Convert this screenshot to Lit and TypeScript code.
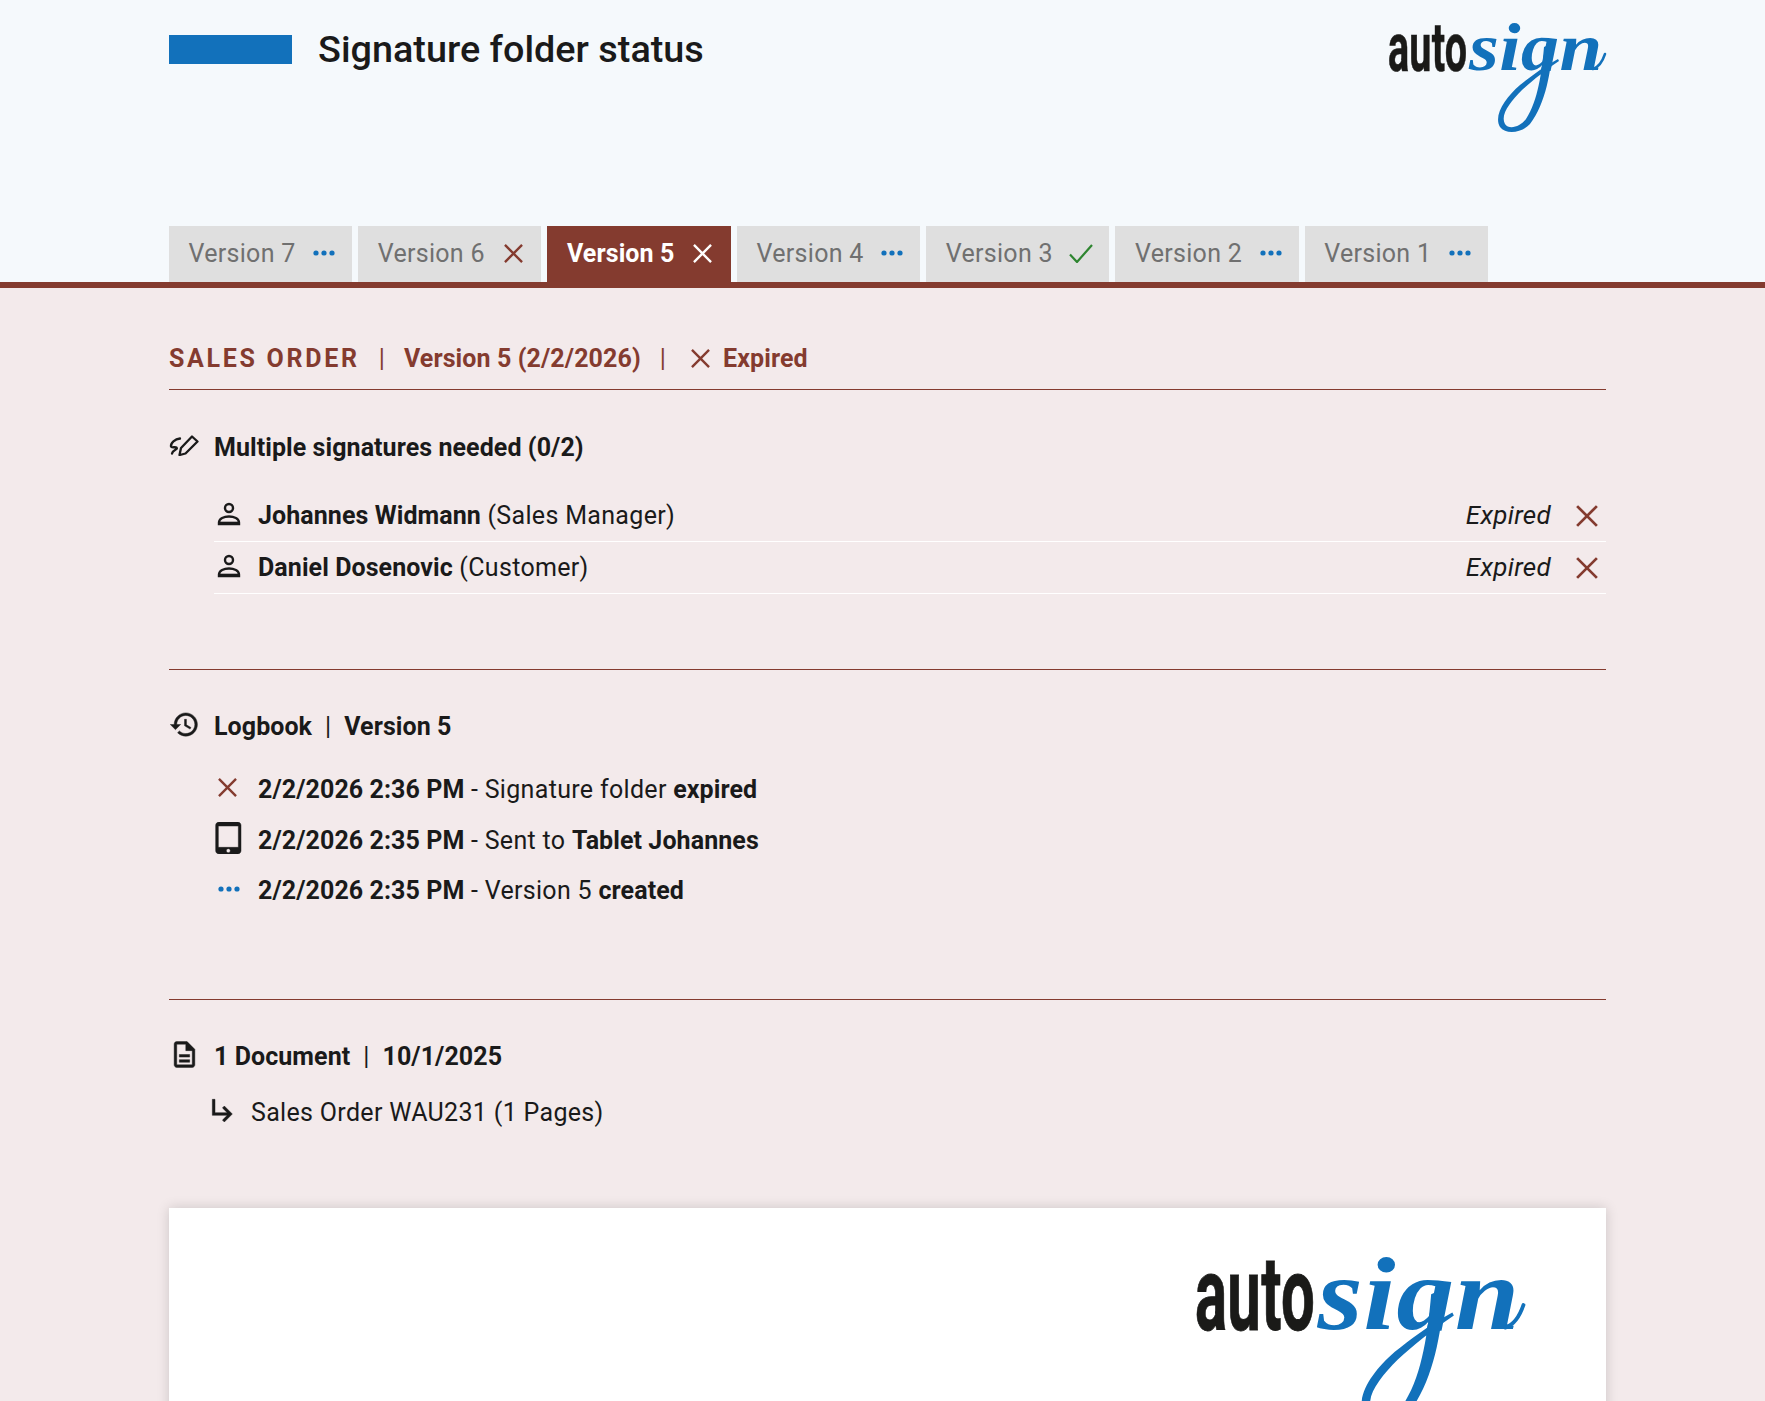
import { LitElement, html, css, svg } from "lit";
import { customElement } from "lit/decorators.js";

const x = (size: number, cls = "rust", w = 2.5) => html`<svg class=${cls} width=${size} height=${size} viewBox="0 0 20 20" fill="none" stroke="currentColor" stroke-width=${w}><path d="M1 1L19 19M19 1L1 19"/></svg>`;
const dots = () => html`<svg class="blue" width="22" height="6" viewBox="0 0 22 6" fill="currentColor"><circle cx="3" cy="3" r="2.6"/><circle cx="11" cy="3" r="2.6"/><circle cx="19" cy="3" r="2.6"/></svg>`;
const check = () => html`<svg class="green" width="24" height="19" viewBox="0 0 24 19" fill="none" stroke="currentColor" stroke-width="2.2"><path d="M1 10.5L8 18L23 1"/></svg>`;
const person = () => html`<svg width="24" height="24" viewBox="0 0 24 24" fill="none" stroke="currentColor" stroke-width="2.4"><circle cx="12" cy="6" r="4"/><path d="M2 22V20.5C2 16.5 7 14.5 12 14.5S22 16.5 22 20.5V22Z"/><path d="M2 20.5H22" stroke-width="1.6"/></svg>`;
const mi = (size: number, d: string) => html`<svg width=${size} height=${size} viewBox="0 0 24 24" fill="currentColor" stroke="currentColor" stroke-width=".35"><path d=${d}/></svg>`;
const signIcon = () => html`<svg width="30" height="22" viewBox="0 0 30 22" fill="none" stroke="currentColor" stroke-width="2.3" stroke-linejoin="round" stroke-linecap="round"><path d="M12 14L23 2.5L28.5 7.5L16.5 19.5L10.5 21Z"/><path d="M11 4.5C6 5 1.5 9 2 12.5C2.5 14.5 7.5 12 8 14C8.5 15.5 3.5 16 3 19.5"/></svg>`;
const logo = (cls: string, id: string) => html`<svg class=${cls} viewBox="0 0 218 109">
  ${svg`<defs><clipPath id=${id}><rect x="78" y="-12" width="150" height="60"/></clipPath></defs>
  <g transform="translate(0 47.5) scale(.582 1)"><text font-family="Roboto,sans-serif" font-weight="700" font-size="68" fill="#1a1a18" stroke="#1a1a18" stroke-width=".6">auto</text></g>
  <g clip-path="url(#${id})"><g transform="translate(81 47) scale(1.128 1)"><text font-family="'Liberation Serif',serif" font-style="italic" font-weight="700" font-size="68" fill="#1271bb">sign</text></g></g>
  <path d="M165 20C163 48 158 80 142 101C134 110 118 112 112 104C105 92 118 74 132 62C142 54 155 44 170 36L171 38C156 48 144 58 134 67C122 79 112 92 117 101C121 107 132 104 138 96C150 78 154 48 156 24Z" fill="#1271bb"/>
  <path d="M205 46C211 44 215 37 217 31" fill="none" stroke="#1271bb" stroke-width="2.5" stroke-linecap="round"/>`}
</svg>`;

const HISTORY = "M13 3c-4.97 0-9 4.03-9 9H1l3.89 3.89.07.14L9 12H6c0-3.87 3.13-7 7-7s7 3.13 7 7-3.13 7-7 7c-1.93 0-3.68-.79-4.94-2.06l-1.42 1.42C8.27 19.99 10.51 21 13 21c4.97 0 9-4.03 9-9s-4.03-9-9-9zm-1 5v5l4.28 2.54.72-1.21-3.5-2.08V8H12z";
const DOC = "M8 16h8v2H8zm0-4h8v2H8zm6-10H6c-1.1 0-2 .9-2 2v16c0 1.1.89 2 1.99 2H18c1.1 0 2-.9 2-2V8l-6-6zm4 18H6V4h7v5h5v11z";
const ARROW = "M19 15l-6 6-1.42-1.42L15.17 16H4V4h2v10h9.17l-3.59-3.58L13 9l6 6z";
const TABLET = "M18.5 0h-14C3.12 0 2 1.12 2 2.5v19C2 22.88 3.12 24 4.5 24h14c1.38 0 2.5-1.12 2.5-2.5v-19C21 1.12 19.88 0 18.5 0zm-7 23c-.83 0-1.5-.67-1.5-1.5s.67-1.5 1.5-1.5 1.5.67 1.5 1.5-.67 1.5-1.5 1.5zm7.5-4H4V3h15v16z";

const TABS: [string, string][] = [["7", "dots"], ["6", "x"], ["5", "active"], ["4", "dots"], ["3", "check"], ["2", "dots"], ["1", "dots"]];

@customElement("app-root")
export class AppRoot extends LitElement {
  static styles = css`
    :host { display: block; height: 100vh; overflow: hidden; background: #f3eaeb; color: #1a1a1a; font-family: Roboto, sans-serif; font-size: 25px; letter-spacing: .32px; }
    svg { display: block; flex: none; }
    .rust { color: #843b2f; }
    .white { color: #fff; }
    .blue { color: #1271bb; }
    .green { color: #2e8530; }
    header { height: 282px; box-sizing: border-box; background: #f5f9fc; border: 0; padding: 0 159px 0 169px; display: flex; flex-direction: column; justify-content: space-between; }
    .top { display: flex; justify-content: space-between; align-items: flex-start; }
    .brand { display: flex; align-items: center; gap: 26px; padding-top: 25px; }
    .mark { width: 123px; height: 29px; background: #1271bb; }
    h1 { margin: 0; font-size: 37.8px; line-height: 48px; font-weight: 500; letter-spacing: 0; }
    .logo-top { width: 218px; height: 109px; margin-top: 23px; overflow: visible; }
    .tabs { display: flex; gap: 6.1px; }
    .tab { height: 56px; box-sizing: border-box; padding: 0 17px 2px 19.5px; background: #dfdfdf; color: #707070; display: flex; align-items: center; gap: 17.5px; letter-spacing: .3px; }
    .tab .slot { width: 22px; display: flex; justify-content: center; }
    .tab.active { background: #843b2f; color: #fff; font-weight: 700; letter-spacing: .1px; }
    main { border-top: 6px solid #843b2f; padding: 0 159px 0 169px; }
    .status { height: 101px; box-sizing: content-box; border-bottom: 1px solid #843b2f; display: flex; align-items: center; padding-top: 0; color: #843b2f; font-weight: 700; letter-spacing: .1px; }
    .status-in { display: flex; align-items: center; height: 40px; margin-top: 39px; }
    .caps { letter-spacing: 2.7px; }
    .pipe { font-weight: 400; margin: 0 19px; }
    .status .x-gap { margin: 0 13px 0 6px; }
    .heading { height: 40px; display: flex; align-items: center; font-weight: 700; letter-spacing: .07px; }
    .heading .ic { width: 45px; flex: none; display: flex; align-items: center; margin-bottom: 4px; }
    .heading .pipe { margin: 0 13px; }
    .sec1 { padding-top: 37px; height: 242px; box-sizing: content-box; padding-bottom: 0; border-bottom: 1px solid #843b2f; }
    .people { margin: 23px 0 0 45px; }
    .row { height: 51px; border-bottom: 1px solid #fff; display: flex; align-items: center; }
    .row .ic { width: 44px; flex: none; padding-left: 3px; box-sizing: border-box; margin-bottom: 3px; }
    .row .name { flex: 1; }
    .row em { margin: 0 25px 2px 0; font-size: 26px; letter-spacing: .3px; }
    .row .xw { margin-right: 8px; }
    b { font-weight: 700; letter-spacing: .08px; }
    .sec2 { padding-top: 36px; height: 293px; border-bottom: 1px solid #843b2f; }
    .logs { margin: 18px 0 0 45px; }
    .log { height: 50.7px; display: flex; align-items: center; }
    .log .ic { width: 44px; flex: none; display: flex; margin-bottom: 4px; padding-left: 4px; box-sizing: border-box; }
    .log .ic.tb { padding-left: 0; margin-left: -1px; margin-right: 1px; margin-bottom: 5px; }
    .sec3 { padding-top: 36px; }
    .doc { margin: 16px 0 0 38px; display: flex; align-items: center; height: 40px; }
    .doc .ic { width: 44px; flex: none; margin-bottom: 4px; }
    .card { margin-top: 76px; height: 400px; background: #fff; box-shadow: 0 0 12px rgba(0,0,0,.16); display: flex; justify-content: flex-end; padding: 50px 81px 0 0; box-sizing: border-box; }
    .logo-card { width: 330px; height: 165px; overflow: visible; }
  `;

  render() {
    return html`
      <header>
        <div class="top">
          <div class="brand"><div class="mark"></div><h1>Signature folder status</h1></div>
          ${logo("logo-top", "clip-a")}
        </div>
        <div class="tabs">
          ${TABS.map(([n, k]) => html`<div class="tab ${k === "active" ? "active" : ""}"><span>Version ${n}</span><span class="slot">${k === "dots" ? dots() : k === "check" ? check() : k === "x" ? x(19) : x(19, "white")}</span></div>`)}
        </div>
      </header>
      <main>
        <div class="status"><div class="status-in">
          <span class="caps">SALES ORDER</span><span class="pipe">|</span><span>Version 5 (2/2/2026)</span><span class="pipe">|</span><span class="x-gap">${x(19)}</span><span>Expired</span>
        </div></div>
        <section class="sec1">
          <div class="heading"><span class="ic">${signIcon()}</span>Multiple signatures needed (0/2)</div>
          <div class="people">
            ${[["Johannes Widmann", "Sales Manager"], ["Daniel Dosenovic", "Customer"]].map(([n, r]) => html`<div class="row"><span class="ic">${person()}</span><span class="name"><b>${n}</b> (${r})</span><em>Expired</em><span class="xw">${x(22)}</span></div>`)}
          </div>
        </section>
        <section class="sec2">
          <div class="heading"><span class="ic">${mi(31, HISTORY)}</span>Logbook<span class="pipe">|</span>Version 5</div>
          <div class="logs">
            <div class="log"><span class="ic">${x(19)}</span><span><b>2/2/2026 2:36 PM</b> - Signature folder <b>expired</b></span></div>
            <div class="log"><span class="ic tb">${mi(32, TABLET)}</span><span><b>2/2/2026 2:35 PM</b> - Sent to <b>Tablet Johannes</b></span></div>
            <div class="log"><span class="ic">${dots()}</span><span><b>2/2/2026 2:35 PM</b> - Version 5 <b>created</b></span></div>
          </div>
        </section>
        <section class="sec3">
          <div class="heading"><span class="ic">${mi(31, DOC)}</span>1 Document<span class="pipe">|</span>10/1/2025</div>
          <div class="doc"><span class="ic">${mi(32, ARROW)}</span><span>Sales Order WAU231 (1 Pages)</span></div>
          <div class="card">${logo("logo-card", "clip-b")}</div>
        </section>
      </main>
    `;
  }
}
